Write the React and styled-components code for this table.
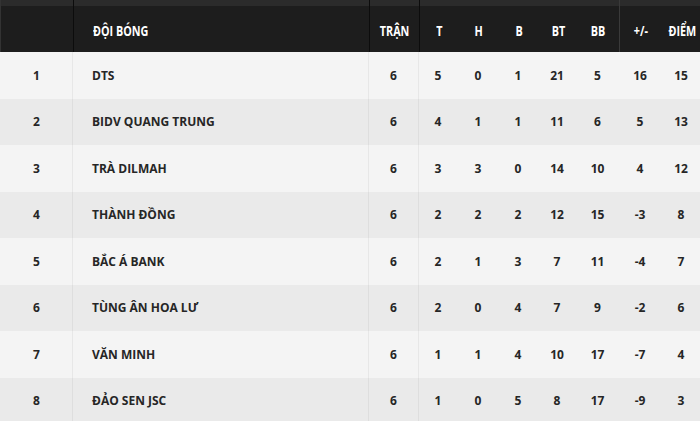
import styled, { createGlobalStyle } from "styled-components";

const GlobalStyle = createGlobalStyle`
  html, body {
    margin: 0;
    padding: 0;
    background: #ffffff;
  }
`;

const columns = [
  { key: "rank", label: "", width: 72 },
  { key: "team", label: "ĐỘI BÓNG", width: 296, align: "left" },
  { key: "played", label: "TRẬN", width: 50, line: true },
  { key: "w", label: "T", width: 39, line: true },
  { key: "d", label: "H", width: 41 },
  { key: "l", label: "B", width: 39 },
  { key: "gf", label: "BT", width: 39 },
  { key: "ga", label: "BB", width: 42 },
  { key: "gd", label: "+/-", width: 43, soft: true },
  { key: "pts", label: "ĐIỂM", width: 39 },
];

const rows = [
  [1, "DTS", 6, 5, 0, 1, 21, 5, 16, 15],
  [2, "BIDV QUANG TRUNG", 6, 4, 1, 1, 11, 6, 5, 13],
  [3, "TRÀ DILMAH", 6, 3, 3, 0, 14, 10, 4, 12],
  [4, "THÀNH ĐỒNG", 6, 2, 2, 2, 12, 15, -3, 8],
  [5, "BẮC Á BANK", 6, 2, 1, 3, 7, 11, -4, 7],
  [6, "TÙNG ÂN HOA LƯ", 6, 2, 0, 4, 7, 9, -2, 6],
  [7, "VĂN MINH", 6, 1, 1, 4, 10, 17, -7, 4],
  [8, "ĐẢO SEN JSC", 6, 1, 0, 5, 8, 17, -9, 3],
];

function App() {
  return (
    <>
      <GlobalStyle />
      <Table>
        <HeadRow>
          {columns.map((col, i) => (
            <HeadCell
              key={col.key}
              $align={col.align}
              $divider={i === 1 || col.line}
              $soft={col.soft}
            >
              <HeadLabel $align={col.align}>{col.label}</HeadLabel>
            </HeadCell>
          ))}
        </HeadRow>
        {rows.map((row, r) => (
          <BodyRow key={row[0]} $alt={r % 2 === 1}>
            {row.map((value, i) => (
              <Cell
                key={columns[i].key}
                $align={columns[i].align}
                $divider={i === 1 || i === 2 || i === 3}
              >
                {value}
              </Cell>
            ))}
          </BodyRow>
        ))}
      </Table>
    </>
  );
}

export default App;

const gridCols = columns.map((c) => `${c.width}px`).join(" ");

const Table = styled.div`
  width: 700px;
  height: 421px;
  overflow: hidden;
  display: flex;
  flex-direction: column;
`;

const HeadRow = styled.div`
  display: grid;
  grid-template-columns: ${gridCols};
  height: 52px;
  flex-shrink: 0;
  background: linear-gradient(#2b2b2b 0, #2b2b2b 6px, #1d1d1d 6px);
  border-left: 1px solid #333;
  box-sizing: border-box;
`;

const HeadCell = styled.div`
  display: flex;
  align-items: center;
  justify-content: ${(p) => (p.$align === "left" ? "flex-start" : "center")};
  padding: 7px 0 0 ${(p) => (p.$align === "left" ? "19px" : "0")};
  box-sizing: border-box;
  border-left: 1px solid
    ${(p) => (p.$divider ? "#0c0c0c" : p.$soft ? "#3a3a3a" : "transparent")};
  overflow: visible;
  white-space: nowrap;
`;

const HeadLabel = styled.span`
  display: inline-block;
  transform: scaleX(0.72);
  transform-origin: ${(p) => (p.$align === "left" ? "left center" : "center")};
  color: #ffffff;
  font-family: "Open Sans", "DejaVu Sans", sans-serif;
  font-weight: 700;
  font-size: 15px;
`;

const BodyRow = styled.div`
  display: grid;
  grid-template-columns: ${gridCols};
  height: 46.5px;
  flex-shrink: 0;
  background: ${(p) => (p.$alt ? "#eaeaea" : "#f4f4f4")};
`;

const Cell = styled.div`
  display: flex;
  align-items: center;
  justify-content: ${(p) => (p.$align === "left" ? "flex-start" : "center")};
  padding-left: ${(p) => (p.$align === "left" ? "19px" : "0")};
  box-sizing: border-box;
  border-left: 1px solid ${(p) => (p.$divider ? "rgba(0, 0, 0, 0.05)" : "transparent")};
  color: #262626;
  font-family: "Open Sans", "DejaVu Sans", sans-serif;
  font-weight: 700;
  font-size: 12px;
`;
